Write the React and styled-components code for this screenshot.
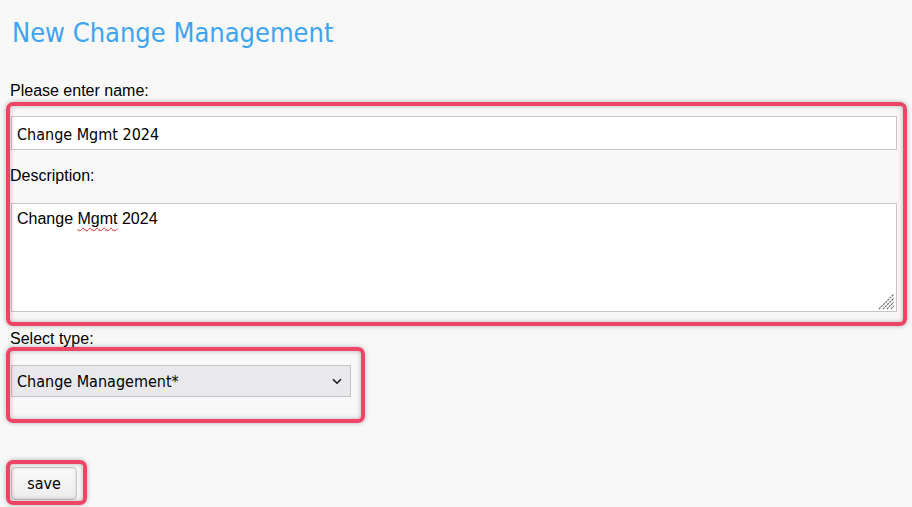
import React from "react";
import styled, { createGlobalStyle } from "styled-components";

const GlobalStyle = createGlobalStyle`
  html, body {
    margin: 0;
    padding: 0;
    background: #f8f8f8;
  }
  body {
    font-family: "Liberation Sans", Arial, sans-serif;
    color: #000;
  }
`;

const tahoma = `"DejaVu Sans Condensed", "DejaVu Sans", Tahoma, sans-serif`;

const Page = styled.div`
  display: flex;
  flex-direction: column;
  align-items: flex-start;
  padding: 17px 15px 0 11px;
  min-height: 507px;
  box-sizing: border-box;
  background: #f8f8f8;
`;

const Title = styled.h1`
  margin: 0 0 0 1px;
  font-family: ${tahoma};
  font-weight: normal;
  font-size: 27px;
  line-height: 32px;
  color: #3fa4ef;
`;

const Label = styled.label`
  display: block;
  margin-top: ${(p) => p.$gap}px;
  margin-left: -1px;
  font-size: 16px;
  line-height: 18px;
  color: #000;
`;

const Group = styled.div`
  position: relative;
  display: flex;
  flex-direction: column;
  align-self: ${(p) => (p.$stretch ? "stretch" : "flex-start")};
  margin-top: ${(p) => p.$gap}px;
`;

const Annotation = styled.div`
  position: absolute;
  pointer-events: none;
  top: ${(p) => p.$t}px;
  right: ${(p) => p.$r}px;
  bottom: ${(p) => p.$b}px;
  left: ${(p) => p.$l}px;
  border: 4px solid #ee4466;
  border-radius: 7px;
  box-shadow: 0 0 5px rgba(0, 0, 0, 0.28), inset 0 0 5px rgba(0, 0, 0, 0.28);
`;

const TextInput = styled.input`
  box-sizing: border-box;
  width: 100%;
  height: 34px;
  margin: 0;
  padding: 2px 5px 0;
  border: 1px solid #c6c6c6;
  background: #fff;
  font-family: ${tahoma};
  font-size: 16px;
  color: #000;
  outline: none;
`;

const TextAreaBox = styled.div`
  position: relative;
  margin-top: 18px;
  width: 100%;
  height: 109px;
`;

const TextArea = styled.div`
  box-sizing: border-box;
  width: 100%;
  height: 100%;
  padding: 6px 5px;
  border: 1px solid #c6c6c6;
  background: #fff;
  font-size: 16px;
  line-height: 18.4px;
  color: #000;
  overflow: hidden;
`;

const Grip = styled.svg`
  position: absolute;
  right: 2px;
  bottom: 2px;
  width: 18px;
  height: 18px;
  pointer-events: none;
`;

const Misspelled = styled.span`
  text-decoration: underline wavy #e02020;
  text-decoration-thickness: 1px;
  text-decoration-skip-ink: none;
  text-underline-offset: 3px;
`;

const SelectWrap = styled.div`
  position: relative;
  width: 340px;
  height: 32px;
`;

const Select = styled.select`
  appearance: none;
  -webkit-appearance: none;
  box-sizing: border-box;
  width: 100%;
  height: 100%;
  margin: 0;
  padding: 1px 30px 0 5px;
  border: 1px solid #c4c4c4;
  border-radius: 0;
  background: #e9e9ed;
  font-family: ${tahoma};
  font-size: 16px;
  color: #000;
  outline: none;
`;

const Chevron = styled.svg`
  position: absolute;
  right: 9px;
  top: 13px;
  width: 10px;
  height: 7px;
  pointer-events: none;
`;

const SaveButton = styled.button`
  box-sizing: border-box;
  width: 66px;
  height: 33px;
  margin: 0;
  padding: 0 0 1px;
  border: 1px solid #c4c4c4;
  border-radius: 4px;
  background: linear-gradient(#fbfbfb, #ececec);
  box-shadow: inset 0 0 4px rgba(0, 0, 0, 0.1);
  font-family: ${tahoma};
  font-size: 16px;
  color: #000;
  cursor: pointer;
`;

export default function App() {
  return (
    <>
      <GlobalStyle />
      <Page>
        <Title>New Change Management</Title>

        <Label $gap={33} htmlFor="name">Please enter name:</Label>
        <Group $stretch $gap={16}>
          <TextInput id="name" defaultValue="Change Mgmt 2024" />
          <Label $gap={17}>Description:</Label>
          <TextAreaBox>
            <TextArea role="textbox" aria-multiline="true">
              Change <Misspelled>Mgmt</Misspelled> 2024
            </TextArea>
            <Grip viewBox="0 0 18 18" fill="none">
              <g stroke="#6f6f6f" strokeWidth="1.2" strokeDasharray="2.2 0.8">
                <path d="M2 17 L17 2" />
                <path d="M6 17 L17 6" />
                <path d="M10 17 L17 10" />
                <path d="M14 17 L17 14" />
              </g>
            </Grip>
          </TextAreaBox>
          <Annotation $t={-14} $r={-10} $b={-14} $l={-5} />
        </Group>

        <Label $gap={18} htmlFor="type">Select type:</Label>
        <Group $gap={17}>
          <SelectWrap>
            <Select id="type" defaultValue="cm">
              <option value="cm">Change Management*</option>
            </Select>
            <Chevron viewBox="0 0 10 7" fill="none">
              <path d="M1 1.2 L5 5.2 L9 1.2" stroke="#1a1a1a" strokeWidth="1.6" />
            </Chevron>
          </SelectWrap>
          <Annotation $t={-18} $r={-14} $b={-26} $l={-5} />
        </Group>

        <Group $gap={70}>
          <SaveButton type="button">save</SaveButton>
          <Annotation $t={-7} $r={-10} $b={-5} $l={-5} />
        </Group>
      </Page>
    </>
  );
}
